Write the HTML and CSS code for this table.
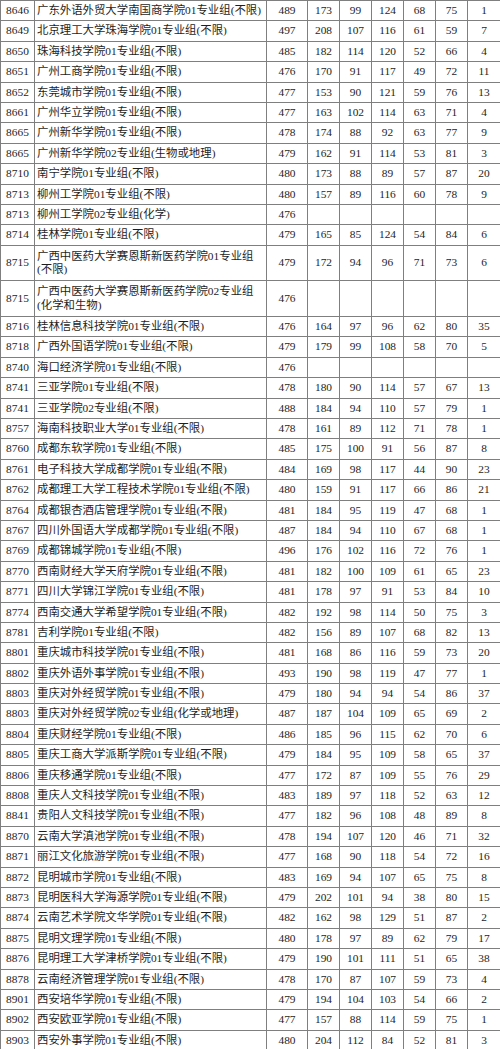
FILE: index.html
```html
<!DOCTYPE html>
<html lang="zh-CN">
<head>
<meta charset="utf-8">
<title>专业组分数表</title>
<link rel="stylesheet" href="styles.css">
</head>
<body>
<table class="score-table">
<colgroup>
<col class="c-code"><col class="c-name"><col class="c-total"><col class="c-n"><col class="c-n"><col class="c-n"><col class="c-n"><col class="c-n"><col class="c-last">
</colgroup>
<tbody>
<tr><td>8646</td><td class="name">广东外语外贸大学南国商学院01专业组(不限)</td><td>489</td><td>173</td><td>99</td><td>124</td><td>68</td><td>75</td><td>1</td></tr>
<tr><td>8649</td><td class="name">北京理工大学珠海学院01专业组(不限)</td><td>497</td><td>208</td><td>107</td><td>116</td><td>61</td><td>59</td><td>7</td></tr>
<tr><td>8650</td><td class="name">珠海科技学院01专业组(不限)</td><td>485</td><td>182</td><td>114</td><td>120</td><td>52</td><td>66</td><td>4</td></tr>
<tr><td>8651</td><td class="name">广州工商学院01专业组(不限)</td><td>476</td><td>170</td><td>91</td><td>117</td><td>49</td><td>72</td><td>11</td></tr>
<tr><td>8652</td><td class="name">东莞城市学院01专业组(不限)</td><td>477</td><td>153</td><td>90</td><td>121</td><td>59</td><td>76</td><td>13</td></tr>
<tr><td>8661</td><td class="name">广州华立学院01专业组(不限)</td><td>477</td><td>163</td><td>102</td><td>114</td><td>63</td><td>71</td><td>4</td></tr>
<tr><td>8665</td><td class="name">广州新华学院01专业组(不限)</td><td>478</td><td>174</td><td>88</td><td>92</td><td>63</td><td>77</td><td>9</td></tr>
<tr><td>8665</td><td class="name">广州新华学院02专业组(生物或地理)</td><td>479</td><td>162</td><td>91</td><td>114</td><td>53</td><td>81</td><td>3</td></tr>
<tr><td>8710</td><td class="name">南宁学院01专业组(不限)</td><td>480</td><td>173</td><td>88</td><td>89</td><td>57</td><td>87</td><td>20</td></tr>
<tr><td>8713</td><td class="name">柳州工学院01专业组(不限)</td><td>480</td><td>157</td><td>89</td><td>116</td><td>60</td><td>78</td><td>9</td></tr>
<tr><td>8713</td><td class="name">柳州工学院02专业组(化学)</td><td>476</td><td></td><td></td><td></td><td></td><td></td><td></td></tr>
<tr><td>8714</td><td class="name">桂林学院01专业组(不限)</td><td>479</td><td>165</td><td>85</td><td>124</td><td>54</td><td>84</td><td>6</td></tr>
<tr class="tall"><td>8715</td><td class="name">广西中医药大学赛恩斯新医药学院01专业组<br>(不限)</td><td>479</td><td>172</td><td>94</td><td>96</td><td>71</td><td>73</td><td>6</td></tr>
<tr class="tall"><td>8715</td><td class="name">广西中医药大学赛恩斯新医药学院02专业组<br>(化学和生物)</td><td>476</td><td></td><td></td><td></td><td></td><td></td><td></td></tr>
<tr><td>8716</td><td class="name">桂林信息科技学院01专业组(不限)</td><td>476</td><td>164</td><td>97</td><td>96</td><td>62</td><td>80</td><td>35</td></tr>
<tr><td>8718</td><td class="name">广西外国语学院01专业组(不限)</td><td>479</td><td>179</td><td>99</td><td>108</td><td>58</td><td>70</td><td>5</td></tr>
<tr><td>8740</td><td class="name">海口经济学院01专业组(不限)</td><td>476</td><td></td><td></td><td></td><td></td><td></td><td></td></tr>
<tr><td>8741</td><td class="name">三亚学院01专业组(不限)</td><td>478</td><td>180</td><td>90</td><td>114</td><td>57</td><td>67</td><td>13</td></tr>
<tr><td>8741</td><td class="name">三亚学院02专业组(不限)</td><td>488</td><td>184</td><td>94</td><td>110</td><td>57</td><td>79</td><td>1</td></tr>
<tr><td>8757</td><td class="name">海南科技职业大学01专业组(不限)</td><td>478</td><td>161</td><td>89</td><td>112</td><td>71</td><td>78</td><td>1</td></tr>
<tr><td>8760</td><td class="name">成都东软学院01专业组(不限)</td><td>485</td><td>175</td><td>100</td><td>91</td><td>56</td><td>87</td><td>8</td></tr>
<tr><td>8761</td><td class="name">电子科技大学成都学院01专业组(不限)</td><td>484</td><td>169</td><td>98</td><td>117</td><td>44</td><td>90</td><td>23</td></tr>
<tr><td>8762</td><td class="name">成都理工大学工程技术学院01专业组(不限)</td><td>480</td><td>159</td><td>91</td><td>117</td><td>66</td><td>86</td><td>21</td></tr>
<tr><td>8764</td><td class="name">成都银杏酒店管理学院01专业组(不限)</td><td>481</td><td>184</td><td>95</td><td>119</td><td>47</td><td>68</td><td>1</td></tr>
<tr><td>8767</td><td class="name">四川外国语大学成都学院01专业组(不限)</td><td>487</td><td>184</td><td>94</td><td>110</td><td>67</td><td>68</td><td>1</td></tr>
<tr><td>8769</td><td class="name">成都锦城学院01专业组(不限)</td><td>496</td><td>176</td><td>102</td><td>116</td><td>72</td><td>76</td><td>1</td></tr>
<tr><td>8770</td><td class="name">西南财经大学天府学院01专业组(不限)</td><td>481</td><td>182</td><td>100</td><td>109</td><td>61</td><td>65</td><td>23</td></tr>
<tr><td>8771</td><td class="name">四川大学锦江学院01专业组(不限)</td><td>481</td><td>178</td><td>97</td><td>91</td><td>53</td><td>84</td><td>10</td></tr>
<tr><td>8774</td><td class="name">西南交通大学希望学院01专业组(不限)</td><td>482</td><td>192</td><td>98</td><td>114</td><td>50</td><td>75</td><td>3</td></tr>
<tr><td>8781</td><td class="name">吉利学院01专业组(不限)</td><td>482</td><td>156</td><td>89</td><td>107</td><td>68</td><td>82</td><td>13</td></tr>
<tr><td>8801</td><td class="name">重庆城市科技学院01专业组(不限)</td><td>481</td><td>168</td><td>86</td><td>116</td><td>59</td><td>73</td><td>20</td></tr>
<tr><td>8802</td><td class="name">重庆外语外事学院01专业组(不限)</td><td>493</td><td>190</td><td>98</td><td>119</td><td>47</td><td>77</td><td>1</td></tr>
<tr><td>8803</td><td class="name">重庆对外经贸学院01专业组(不限)</td><td>479</td><td>180</td><td>94</td><td>94</td><td>54</td><td>86</td><td>37</td></tr>
<tr><td>8803</td><td class="name">重庆对外经贸学院02专业组(化学或地理)</td><td>487</td><td>187</td><td>104</td><td>109</td><td>65</td><td>69</td><td>2</td></tr>
<tr><td>8804</td><td class="name">重庆财经学院01专业组(不限)</td><td>486</td><td>185</td><td>96</td><td>115</td><td>62</td><td>70</td><td>6</td></tr>
<tr><td>8805</td><td class="name">重庆工商大学派斯学院01专业组(不限)</td><td>479</td><td>184</td><td>95</td><td>109</td><td>58</td><td>65</td><td>37</td></tr>
<tr><td>8806</td><td class="name">重庆移通学院01专业组(不限)</td><td>477</td><td>172</td><td>87</td><td>109</td><td>55</td><td>76</td><td>29</td></tr>
<tr><td>8808</td><td class="name">重庆人文科技学院01专业组(不限)</td><td>483</td><td>189</td><td>97</td><td>118</td><td>52</td><td>63</td><td>12</td></tr>
<tr><td>8841</td><td class="name">贵阳人文科技学院01专业组(不限)</td><td>477</td><td>182</td><td>96</td><td>108</td><td>48</td><td>89</td><td>8</td></tr>
<tr><td>8870</td><td class="name">云南大学滇池学院01专业组(不限)</td><td>478</td><td>194</td><td>107</td><td>120</td><td>46</td><td>71</td><td>32</td></tr>
<tr><td>8871</td><td class="name">丽江文化旅游学院01专业组(不限)</td><td>477</td><td>168</td><td>90</td><td>118</td><td>54</td><td>72</td><td>16</td></tr>
<tr><td>8872</td><td class="name">昆明城市学院01专业组(不限)</td><td>483</td><td>169</td><td>94</td><td>107</td><td>65</td><td>75</td><td>8</td></tr>
<tr><td>8873</td><td class="name">昆明医科大学海源学院01专业组(不限)</td><td>479</td><td>202</td><td>101</td><td>94</td><td>38</td><td>80</td><td>15</td></tr>
<tr><td>8874</td><td class="name">云南艺术学院文华学院01专业组(不限)</td><td>482</td><td>162</td><td>98</td><td>129</td><td>51</td><td>87</td><td>2</td></tr>
<tr><td>8875</td><td class="name">昆明文理学院01专业组(不限)</td><td>480</td><td>178</td><td>97</td><td>89</td><td>62</td><td>79</td><td>17</td></tr>
<tr><td>8876</td><td class="name">昆明理工大学津桥学院01专业组(不限)</td><td>479</td><td>190</td><td>101</td><td>111</td><td>51</td><td>65</td><td>38</td></tr>
<tr><td>8878</td><td class="name">云南经济管理学院01专业组(不限)</td><td>478</td><td>170</td><td>87</td><td>107</td><td>59</td><td>73</td><td>4</td></tr>
<tr><td>8901</td><td class="name">西安培华学院01专业组(不限)</td><td>479</td><td>194</td><td>104</td><td>103</td><td>54</td><td>66</td><td>2</td></tr>
<tr><td>8902</td><td class="name">西安欧亚学院01专业组(不限)</td><td>477</td><td>157</td><td>88</td><td>114</td><td>59</td><td>75</td><td>1</td></tr>
<tr><td>8903</td><td class="name">西安外事学院01专业组(不限)</td><td>480</td><td>204</td><td>112</td><td>84</td><td>52</td><td>81</td><td>3</td></tr>
</tbody>
</table>
</body>
</html>
```
FILE: styles.css
```css
html, body {
  margin: 0;
  padding: 0;
  background: #ffffff;
}

.score-table {
  width: 500px;
  table-layout: fixed;
  border-collapse: collapse;
  font-family: "Liberation Serif", "Noto Sans CJK SC", serif;
  font-size: 11.4px;
  color: #1e1e1e;
}

.c-code { width: 34px; }
.c-name { width: 232px; }
.c-total { width: 41px; }
.c-n { width: 32px; }
.c-last { width: 33px; }

.score-table tr {
  height: 20.4px;
}

.score-table tr.tall {
  height: 35.7px;
}

.score-table td {
  border: 1px solid #7f7f7f;
  padding: 0;
  text-align: center;
  vertical-align: middle;
  line-height: 13.4px;
  white-space: nowrap;
  overflow: hidden;
}

.score-table td.name {
  text-align: left;
  padding-left: 2px;
}
```
